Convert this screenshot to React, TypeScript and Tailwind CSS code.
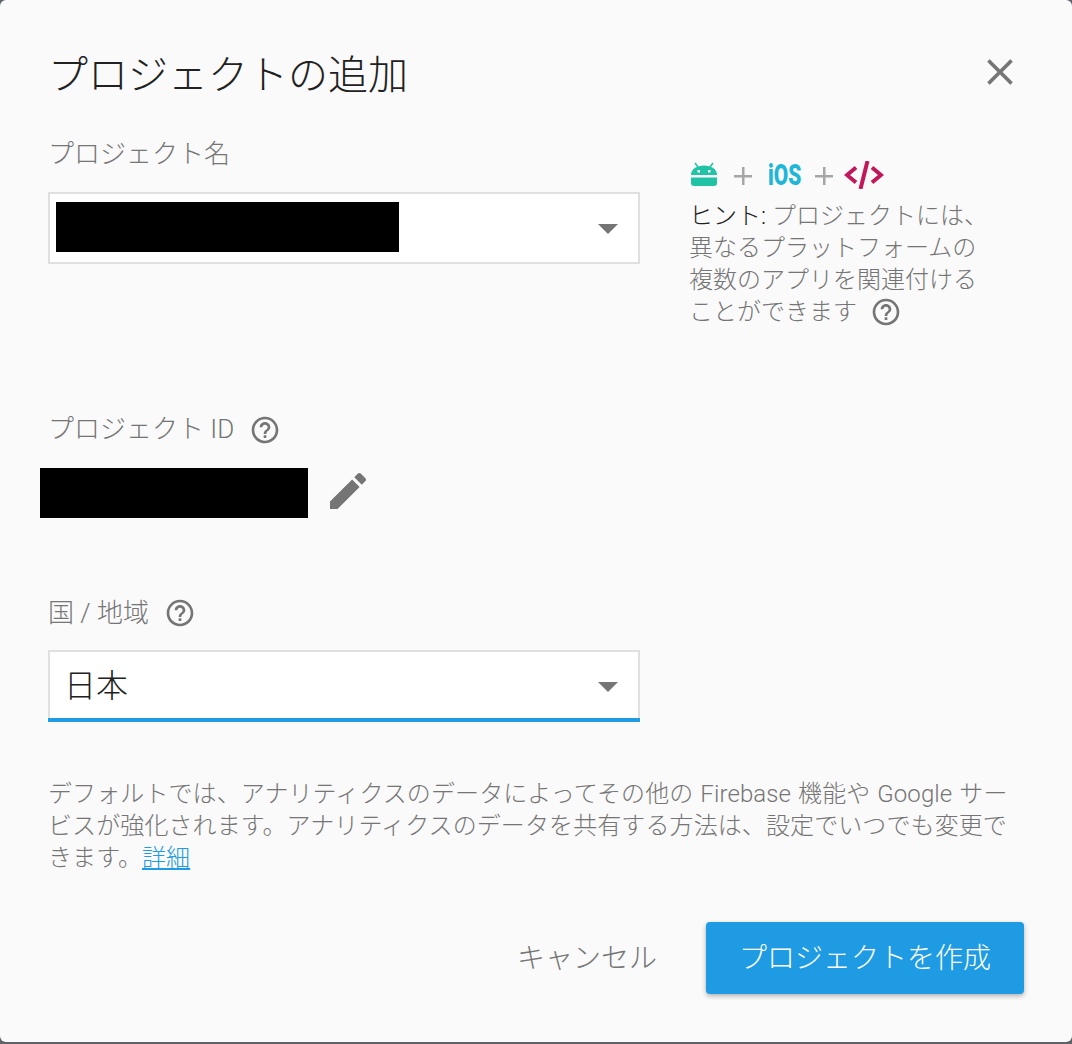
import React from 'react';

const FONT = "font-['Roboto','Noto_Sans_CJK_JP',sans-serif]";

const HelpIcon: React.FC<{ className?: string }> = ({ className }) => (
    <svg viewBox="0 0 24 24" className={className} fill="currentColor" aria-hidden="true">
        <path d="M11 18h2v-2h-2v2zm1-16C6.48 2 2 6.48 2 12s4.48 10 10 10 10-4.48 10-10S17.52 2 12 2zm0 18c-4.41 0-8-3.59-8-8s3.59-8 8-8 8 3.59 8 8-3.59 8-8 8zm0-14c-2.21 0-4 1.79-4 4h2c0-1.1.9-2 2-2s2 .9 2 2c0 2-3 1.75-3 5h2c0-2.25 3-2.5 3-5 0-2.21-1.79-4-4-4z" />
    </svg>
);

const Caret = () => (
    <svg viewBox="0 0 20 10" className="w-[20px] h-[10px] text-[#757575]" fill="currentColor" aria-hidden="true">
        <path d="M0 0h20L10 10z" />
    </svg>
);

const Plus = () => (
    <svg viewBox="0 0 18 18" className="w-[18px] h-[18px]" fill="#a6a6a6" aria-hidden="true">
        <path d="M8 0h2.500v8H18v2.500h-7.500V18H8v-7.500H0V8h8z" />
    </svg>
);

const AndroidIcon = () => (
    <svg viewBox="0 0 26 24" className="w-[26px] h-[24px]" aria-hidden="true">
        <path d="M4 1l3 4M22 1l-3 4" stroke="#21c2a5" strokeWidth="1.500" />
        <path d="M0 13C0 7 6 3.500 13 3.500S26 7 26 13z" fill="#21c2a5" />
        <rect x="6.500" y="8" width="2.500" height="2.500" fill="#fafafa" />
        <rect x="17" y="8" width="2.500" height="2.500" fill="#fafafa" />
        <path d="M0 15.500h26V21a3 3 0 0 1-3 3H3a3 3 0 0 1-3-3z" fill="#21c2a5" />
    </svg>
);

const CodeIcon = () => (
    <svg viewBox="0 0 40 28" className="w-[40px] h-[28px]" fill="none" stroke="#c2185b" strokeWidth="4" aria-hidden="true">
        <path d="M12 6.500L3 14l9 7.500M28 6.500l9 7.500-9 7.500" />
        <path d="M23.500 0l-7 28" />
    </svg>
);

const App: React.FC = () => {
    return (
        <div className={`h-[1044px] w-full bg-[#5f6368] font-light ${FONT}`}>
            <div className="h-[1042px] rounded-[6px] bg-[#fafafa]">
                {/* Title */}
                <div className="flex h-[135px] items-start justify-between pl-[48px] pr-[50px] pt-[50px]">
                    <h1 className="pt-[2px] text-[40px] leading-[48px] font-light text-[#212121]">プロジェクトの追加</h1>
                    <button className="text-[#757575]" aria-label="close">
                        <svg viewBox="0 0 24 24" className="w-[44px] h-[44px]" fill="currentColor" aria-hidden="true">
                            <path d="M19 6.410L17.590 5 12 10.590 6.410 5 5 6.410 10.590 12 5 17.590 6.410 19 12 13.410 17.590 19 19 17.590 13.410 12z" />
                        </svg>
                    </button>
                </div>

                <div className="flex pl-[48px]">
                    <div className="w-[592px] shrink-0">
                        <label className="block pt-[2px] text-[26px] leading-[34px] text-[#757575]">プロジェクト名</label>
                        <div className="mt-[21px] flex h-[72px] items-center justify-between border-2 border-[#e0e0e0] bg-white pl-[6px] pr-[20px]">
                            <div className="-mt-[2px] h-[50px] w-[343px] bg-black" />
                            <span className="mt-[1px]"><Caret /></span>
                        </div>

                        <div className="mt-[147px] flex items-center text-[26px] leading-[36px] text-[#757575]">
                            <span>プロジェクト ID</span>
                            <HelpIcon className="ml-[15px] mt-[1px] h-[32px] w-[32px]" />
                        </div>
                        <div className="-ml-[8px] mt-[21px] flex h-[50px] items-center">
                            <div className="h-[50px] w-[268px] bg-black" />
                            <svg viewBox="0 0 24 24" className="-mt-[4px] ml-[16px] h-[48px] w-[48px] text-[#757575]" fill="currentColor" aria-hidden="true">
                                <path d="M3 17.250V21h3.750L17.810 9.940l-3.750-3.750L3 17.250zM20.710 7.040c.39-.39.39-1.020 0-1.410l-2.340-2.340c-.39-.39-1.020-.39-1.410 0l-1.830 1.830 3.750 3.750 1.830-1.830z" />
                            </svg>
                        </div>

                        <div className="mt-[77px] flex items-center text-[26px] leading-[36px] text-[#757575]">
                            <span>国 / 地域</span>
                            <HelpIcon className="ml-[15px] h-[32px] w-[32px]" />
                        </div>
                        <div className="mt-[19px]">
                            <div className="flex h-[68px] items-center justify-between border-2 border-b-0 border-[#e0e0e0] bg-white pl-[14px] pr-[20px]">
                                <span className="mt-[2px] text-[32px] leading-[40px] font-light text-[#212121]">日本</span>
                                <span className="mt-[4px]"><Caret /></span>
                            </div>
                            <div className="h-[4px] bg-[#1e9be3]" />
                        </div>
                    </div>

                    <div className="ml-[50px] pt-[25px]">
                        <div className="flex h-[30px] items-center">
                            <span className="-mt-[3px] ml-[1px]"><AndroidIcon /></span>
                            <span className="ml-[17px] mt-[1px]"><Plus /></span>
                            <span className="ml-[16px] inline-block w-[48px] origin-left scale-x-[0.72] text-[29px] leading-[30px] font-black text-[#1fb6d8]">iOS</span>
                            <span className="-ml-[1px] mt-[1px]"><Plus /></span>
                            <span className="ml-[11px]"><CodeIcon /></span>
                        </div>
                        <p className="-ml-[1px] mt-[10px] w-[300px] text-[24px] leading-[32px] text-[#757575]">
                            <span className="text-[#212121]">ヒント:</span> プロジェクトには、<br />
                            異なるプラットフォームの<br />
                            複数のアプリを関連付ける<br />
                            ことができます
                            <HelpIcon className="ml-[13px] inline-block h-[32px] w-[32px] align-[-8px]" />
                        </p>
                    </div>
                </div>

                {/* Notice */}
                <p className="mt-[56px] w-[1024px] pl-[48px] text-[24px] leading-[32px] tracking-[0.1px] [word-spacing:1px] text-[#757575]">
                    デフォルトでは、アナリティクスのデータによってその他の Firebase 機能や Google サービスが強化されます。アナリティクスのデータを共有する方法は、設定でいつでも変更できます。<a className="text-[#1e9be3] underline">詳細</a>
                </p>

                {/* Actions */}
                <div className="mt-[48px] flex items-center justify-end pr-[48px]">
                    <button className="pt-[2px] text-[28px] leading-[36px] text-[#757575]">キャンセル</button>
                    <button className="ml-[49px] h-[72px] w-[318px] rounded-[4px] bg-[#1e9be3] pt-[2px] text-[28px] text-white shadow-[0_2px_5px_rgba(0,0,0,0.3)]">プロジェクトを作成</button>
                </div>
            </div>
        </div>
    );
};

export default App;
